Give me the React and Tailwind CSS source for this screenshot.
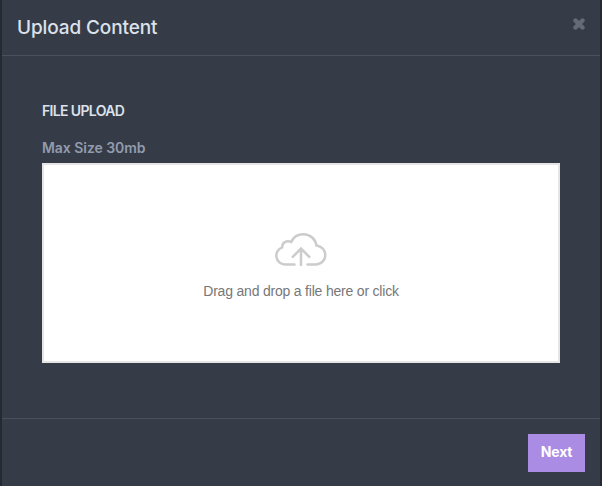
import React from "react";

function CloudUploadIcon() {
  return (
    <svg width="52" height="34" viewBox="0 0 52 34" fill="none" stroke="#cccccc" strokeWidth="2.5" aria-hidden="true">
      <path strokeLinecap="round" d="M19.5 31.5H10A8.8 8.8 0 0 1 7.2 14.4C6.8 9.7 11.5 6.7 16.2 9C18.5 3.9 23 1.3 28.3 1.3C35.5 1.3 40.4 6.2 41.5 12.6C46.7 13.2 50.3 17.2 50.3 21.9C50.3 27.3 46 31.5 40.8 31.5H32.5" />
      <path d="M26 33V15.2M17 24.6L26 15.6L35 24.6" />
    </svg>
  );
}

function CloseIcon() {
  return (
    <svg width="12" height="12" viewBox="0 0 12 12" fill="none" stroke="#646b76" strokeWidth="4.4" strokeLinejoin="round" strokeLinecap="round" aria-hidden="true">
      <path d="M2.5 2.5L9.5 9.5M9.5 2.5L2.5 9.5" />
    </svg>
  );
}

export default function App() {
  return (
    <div className="flex h-[486px] w-[602px] flex-col overflow-hidden border-x-2 border-l-[#252932] border-r-[#252932] bg-[#353c48] font-[Inter,sans-serif]">
      <header className="flex h-14 shrink-0 items-start justify-between border-b border-[#4b515c] pl-[15px] pr-[15px]">
        <h1 className="mt-[14px] text-[19px] font-medium leading-7 tracking-[-0.12px] text-[#dce1ec]">Upload Content</h1>
        <button aria-label="Close" className="mt-[18px]">
          <CloseIcon />
        </button>
      </header>
      <main className="flex h-[362px] shrink-0 flex-col px-10 pt-[45px]">
        <h2 className="text-[14px] font-semibold leading-5 tracking-[-0.65px] text-[#dce1ec]">FILE UPLOAD</h2>
        <p className="mt-[17px] text-[14px] font-semibold leading-5 tracking-[-0.05px] text-[#929bad]">Max Size 30mb</p>
        <div className="mt-[5px] flex h-[200px] w-[518px] flex-col items-center border-2 border-[#e5e5e5] bg-white pt-[68px]">
          <CloudUploadIcon />
          <p className="mt-[12px] whitespace-nowrap font-['Liberation_Sans',sans-serif] text-[14px] leading-6 tracking-[-0.2px] text-[#777777]">
            Drag and drop a file here or click
          </p>
        </div>
      </main>
      <footer className="flex h-[68px] shrink-0 justify-end border-t border-[#4b515c] pr-[15px] pt-[15px]">
        <button className="h-[38px] w-[57px] bg-[#ab8ce4] pb-[3px] text-[14px] font-bold tracking-[-0.15px] text-white">Next</button>
      </footer>
    </div>
  );
}
